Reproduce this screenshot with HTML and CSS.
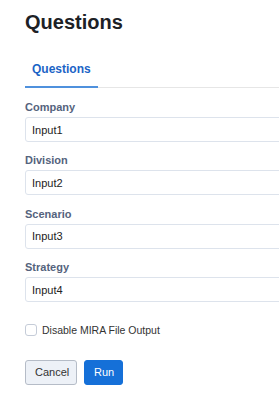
FILE: index.html
```html
<!DOCTYPE html>
<html>
<head>
  <link rel="stylesheet" href="styles.css">
</head>
<body>
  <h1 class="page-title">Questions</h1>

  <div class="tabs">
    <div class="tab active">Questions</div>
  </div>

  <form class="question-form">
    <div class="field">
      <label for="company">Company</label>
      <input type="text" id="company" value="Input1">
    </div>

    <div class="field">
      <label for="division">Division</label>
      <input type="text" id="division" value="Input2">
    </div>

    <div class="field">
      <label for="scenario">Scenario</label>
      <input type="text" id="scenario" value="Input3">
    </div>

    <div class="field">
      <label for="strategy">Strategy</label>
      <input type="text" id="strategy" value="Input4">
    </div>

    <label class="check-row">
      <span class="checkbox"></span>
      Disable MIRA File Output
    </label>

    <div class="button-group">
      <button type="button" class="btn btn-cancel">Cancel</button>
      <button type="button" class="btn btn-run">Run</button>
    </div>
  </form>
</body>
</html>
```

FILE: styles.css
```css
html, body {
  overflow: hidden;
}

body {
  margin: 0;
  padding: 11px 0 0 25px;
  background-color: #ffffff;
  font-family: "Liberation Sans", Arial, sans-serif;
  color: #2b2b2b;
}

.page-title {
  margin: 0;
  font-size: 20px;
  line-height: 23px;
  font-weight: bold;
  color: #1d2126;
}

.tabs {
  display: flex;
  margin-top: 18px;
  border-bottom: 1px solid #e6e6e6;
}

.tab {
  padding: 10px 7px 10px 7px;
  font-size: 12px;
  line-height: 14px;
  font-weight: bold;
  color: #1b64c6;
  margin-bottom: -1px;
}

.tab.active {
  border-bottom: 2px solid #4f91dd;
}

.question-form {
  display: flex;
  flex-direction: column;
  padding-top: 13px;
}

.field {
  display: flex;
  flex-direction: column;
  margin-bottom: 12.4px;
}

.field label {
  font-size: 11px;
  line-height: 13px;
  font-weight: bold;
  color: #55637d;
  margin-bottom: 3px;
}

.field input {
  width: 330px;
  height: 25px;
  box-sizing: border-box;
  padding: 0 6px;
  border: 1px solid #dde3ec;
  border-radius: 3px;
  font-family: inherit;
  font-size: 11px;
  color: #222222;
  background: #ffffff;
}

.check-row {
  display: flex;
  align-items: center;
  gap: 5px;
  margin-top: 8px;
  font-size: 10.5px;
  line-height: 14px;
  color: #333333;
}

.checkbox {
  width: 12px;
  height: 12px;
  box-sizing: border-box;
  border: 1px solid #c5ccd8;
  border-radius: 3px;
  background: #ffffff;
}

.button-group {
  display: flex;
  gap: 7px;
  margin-top: 23px;
}

.btn {
  height: 25px;
  box-sizing: border-box;
  padding: 0 9px;
  font-family: inherit;
  font-size: 11px;
  border-radius: 3px;
  cursor: pointer;
}

.btn-cancel {
  width: 52px;
  background-color: #edf1f7;
  border: 1px solid #b5bcc7;
  color: #333333;
}

.btn-run {
  width: 39px;
  background-color: #1570d8;
  border: 1px solid #1570d8;
  color: #ffffff;
}
```
